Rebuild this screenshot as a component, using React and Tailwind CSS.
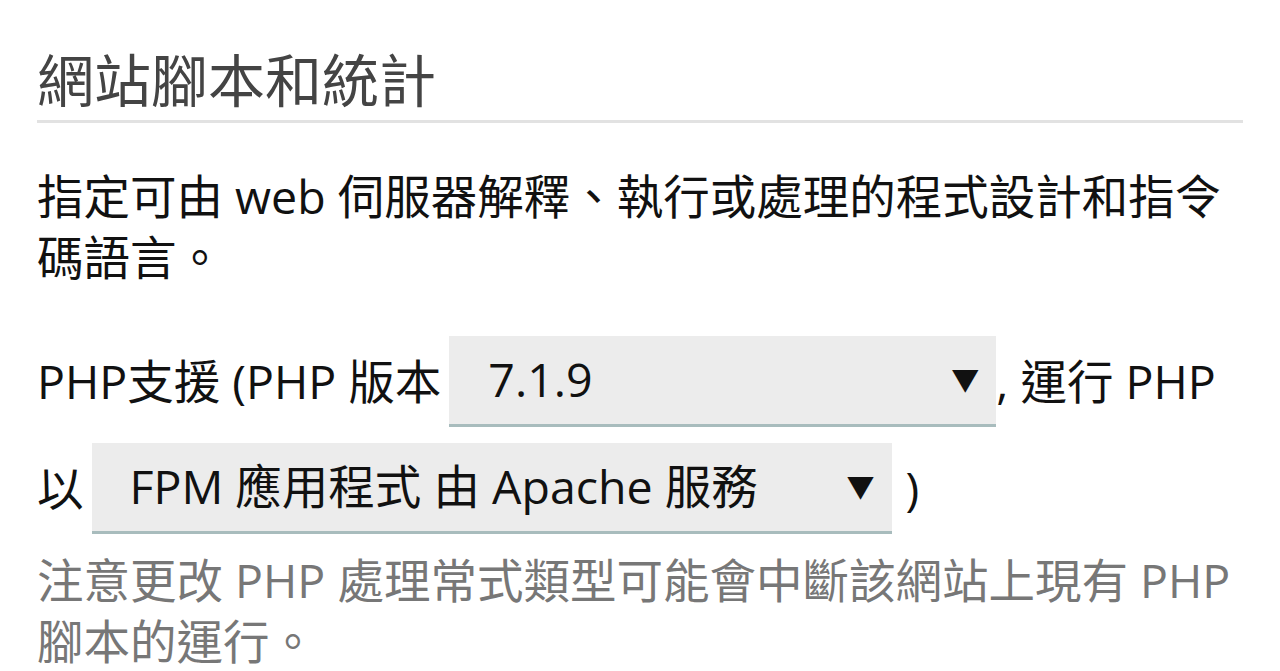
export default function App() {
  const font = { fontFamily: '"Open Sans", "Noto Sans CJK TC", sans-serif' };
  return (
    <div className="w-[1280px] h-[671px] overflow-hidden bg-white" style={font}>
      <div className="pl-[37px] pr-[37px] pt-[44px]">
        <h2 className="text-[57px] leading-[72px] text-[#444] font-normal">網站腳本和統計</h2>
        <div className="mt-[4px] h-[3px] bg-[#e2e2e2]" />
        <p className="mt-[43px] text-[46.5px] leading-[61px] text-[#111]">
          指定可由 web 伺服器解釋、執行或處理的程式設計和指令碼語言。
        </p>
        <div className="mt-[48px] flex items-center text-[46.5px] text-[#111]">
          <span>PHP支援 (PHP 版本</span>
          <div className="ml-[8px] w-[547px] h-[91px] bg-[#ececec] border-b-[3px] border-[#a8bcbd] flex items-center justify-between pl-[39px] pr-[17px]">
            <span>7.1.9</span>
            <span className="text-[28px] leading-none">▼</span>
          </div>
          <span>, 運行 PHP</span>
        </div>
        <div className="mt-[16px] flex items-center text-[46.5px] text-[#111]">
          <span>以</span>
          <div className="ml-[8px] w-[800px] h-[91px] bg-[#ececec] border-b-[3px] border-[#a8bcbd] flex items-center justify-between pl-[38px] pr-[17px]">
            <span>FPM 應用程式 由 Apache 服務</span>
            <span className="text-[28px] leading-none">▼</span>
          </div>
          <span className="ml-[14px]">)</span>
        </div>
        <p className="mt-[16px] text-[46.5px] leading-[61px] text-[#777]">
          注意更改 PHP 處理常式類型可能會中斷該網站上現有 PHP 腳本的運行。
        </p>
      </div>
    </div>
  );
}
